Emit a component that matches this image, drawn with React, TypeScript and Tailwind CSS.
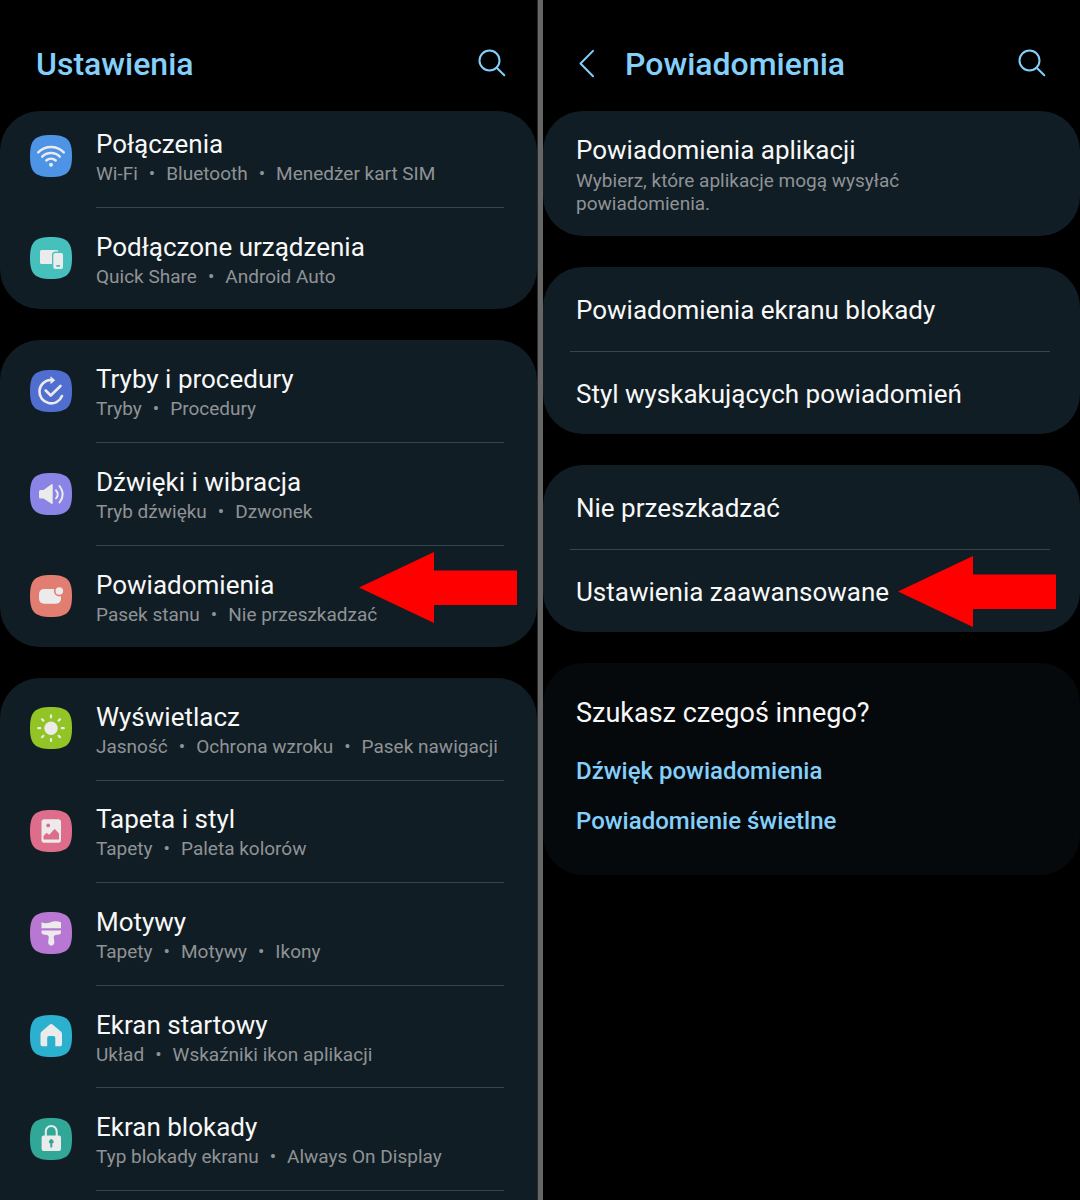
import type { ReactNode } from "react";

const glyphs: Record<string, ReactNode> = {
  wifi: (
    <>
      <g fill="none" stroke="#ebebeb" strokeWidth="2.5" strokeLinecap="round">
        <path d="M8.2 17.4C15.5 10.2 26.5 10.2 33.8 17.4" />
        <path d="M12.2 21.6C17 16.8 25 16.8 29.8 21.6" />
        <path d="M16.3 25.5C19 23 23 23 25.7 25.5" />
      </g>
      <circle cx="21" cy="29.7" r="2" />
    </>
  ),
  devices: (
    <>
      <path d="M11.5 13H27Q28.5 13 28.5 14.5H25.5Q22 14.5 22 18V27H11.5Q10 27 10 25.5V14.5Q10 13 11.5 13Z" />
      <path
        fillRule="evenodd"
        d="M25.3 16H31Q33 16 33 18V30Q33 32 31 32H25.3Q23.3 32 23.3 30V18Q23.3 16 25.3 16ZM26.3 28V29.7H30V28Z"
      />
    </>
  ),
  modes: (
    <>
      <g fill="none" stroke="#ebebeb" strokeWidth="2.6" strokeLinecap="round" strokeLinejoin="round">
        <path d="M20.5 10A11.7 11.7 0 1 0 32 26" />
        <path d="M15.7 20.5L20.7 25.5L30.5 16" />
      </g>
      <path d="M20.5 6.2L25.2 10.2L20.5 14.2Z" />
    </>
  ),
  sound: (
    <>
      <path d="M10.5 17H13.5L21.5 11.2Q22.7 10.5 22.7 12V30Q22.7 31.5 21.5 30.8L13.5 25.5H10.5Q9 25.5 9 24V18.5Q9 17 10.5 17Z" />
      <g fill="none" stroke="#ebebeb" strokeWidth="2" strokeLinecap="round">
        <path d="M26 17.3Q29.6 21.3 26 25.3" />
        <path d="M29.5 13Q36 21.3 29.5 29.5" />
      </g>
    </>
  ),
  notifications: (
    <>
      <rect x="9" y="14" width="22" height="14.7" rx="5" />
      <circle cx="29.3" cy="16" r="5.4" fill="#e27d72" />
      <circle cx="29.3" cy="16" r="3.8" />
    </>
  ),
  display: (
    <>
      <circle cx="21" cy="21.2" r="6.7" />
      <path
        fill="none"
        stroke="#ebebeb"
        strokeWidth="2.2"
        strokeLinecap="round"
        d="M21 8.4v2M21 32v2M8.2 21.2h2M31.8 21.2h2M12 12.2l1.4 1.4M28.6 28.8l1.4 1.4M12 30.2l1.4-1.4M28.6 13.6l1.4-1.4"
      />
    </>
  ),
  wallpaper: (
    <>
      <rect x="11.5" y="9.3" width="19.5" height="23.4" rx="2.8" />
      <g fill="#de6d8c">
        <circle cx="18.2" cy="15.4" r="1.9" />
        <path d="M13.5 26L16 23.2Q16.5 22.7 17.2 23.2L19.3 24.8L24 19.6Q24.7 19 25.4 19.6L29 23.5V29.5H13.5Z" />
      </g>
    </>
  ),
  themes: (
    <>
      <path d="M11.5 10.3C16 12.3 19.5 10.6 23 9.5C26 8.8 28.5 9.3 31 10.3V16.3H11.5Z" />
      <path d="M11.5 18.4H31V20.5Q31 22.4 29 22.6L25.5 23Q23.7 23.3 23.7 25L24.3 30A3.1 3.1 0 1 1 18.2 30L18.8 25Q18.8 23.3 17 23L13.5 22.6Q11.5 22.4 11.5 20.5Z" />
    </>
  ),
  home: (
    <path d="M19.8 9.6Q21.2 8.5 22.6 9.6L30.8 16.6Q32 17.6 32 19V29.5Q32 31.2 30.3 31.2H25.3V22.8Q25.3 21 23.5 21H19Q17.2 21 17.2 22.8V31.2H12.2Q10.5 31.2 10.5 29.5V19Q10.5 17.6 11.7 16.6Z" />
  ),
  lock: (
    <>
      <path fill="none" stroke="#ebebeb" strokeWidth="2" d="M15.8 18.5V13.4A5.4 5.4 0 0 1 26.7 13.4V18.5" />
      <path
        fillRule="evenodd"
        d="M13.6 17.4H29Q31 17.4 31 19.4V31Q31 33 29 33H13.6Q11.6 33 11.6 31V19.4Q11.6 17.4 13.6 17.4ZM20.3 25.5V29.5H22.3V25.5A2.2 2.2 0 1 0 20.3 25.5Z"
      />
    </>
  ),
};

type Item = { icon: string; color: string; title: string; details: string[]; marked?: boolean };

const connections: Item[] = [
  { icon: "wifi", color: "#4e94e6", title: "Połączenia", details: ["Wi-Fi", "Bluetooth", "Menedżer kart SIM"] },
  { icon: "devices", color: "#46c0bc", title: "Podłączone urządzenia", details: ["Quick Share", "Android Auto"] },
];

const alerts: Item[] = [
  { icon: "modes", color: "#506ed0", title: "Tryby i procedury", details: ["Tryby", "Procedury"] },
  { icon: "sound", color: "#8984e6", title: "Dźwięki i wibracja", details: ["Tryb dźwięku", "Dzwonek"] },
  {
    icon: "notifications",
    color: "#e27d72",
    title: "Powiadomienia",
    details: ["Pasek stanu", "Nie przeszkadzać"],
    marked: true,
  },
];

const appearance: Item[] = [
  { icon: "display", color: "#93c425", title: "Wyświetlacz", details: ["Jasność", "Ochrona wzroku", "Pasek nawigacji"] },
  { icon: "wallpaper", color: "#de6d8c", title: "Tapeta i styl", details: ["Tapety", "Paleta kolorów"] },
  { icon: "themes", color: "#b877d2", title: "Motywy", details: ["Tapety", "Motywy", "Ikony"] },
  { icon: "home", color: "#2bb0d0", title: "Ekran startowy", details: ["Układ", "Wskaźniki ikon aplikacji"] },
  { icon: "lock", color: "#31a797", title: "Ekran blokady", details: ["Typ blokady ekranu", "Always On Display"] },
];

function SearchButton() {
  return (
    <button type="button" aria-label="Szukaj" className="cursor-pointer">
      <svg
        className="block size-7 overflow-visible"
        viewBox="0 0 28 28"
        fill="none"
        stroke="#84d0fb"
        strokeWidth="2"
        strokeLinecap="round"
      >
        <circle cx="11.5" cy="10.5" r="10" />
        <path d="M18.7 17.7L26.3 25.3" />
      </svg>
    </button>
  );
}

function Arrow() {
  return (
    <svg className="pointer-events-none h-[71px] w-[158px]" viewBox="0 0 158 71" fill="#ff0000">
      <path d="M0 35.5L75 0V18.5H158V53H75V71Z" />
    </svg>
  );
}

function ItemRow({ item, className }: { item: Item; className: string }) {
  return (
    <li className={`group relative flex ${className}`}>
      <button type="button" className="flex w-full cursor-pointer items-stretch pr-[33px] pl-[30px] text-left">
        <svg className="mb-0.5 size-[42px] shrink-0 self-center" viewBox="0 0 42 42" fill="#ebebeb">
          <path fill={item.color} d="M21 0C37 0 42 5 42 21S37 42 21 42 0 37 0 21 5 0 21 0Z" />
          {glyphs[item.icon]}
        </svg>
        <span className="ml-6 flex min-w-0 flex-1 flex-col justify-center border-[#36444b] pt-0.5 group-[.divided]:border-b">
          <span className="text-[26px] leading-[34px] text-[#f8f8f8]">{item.title}</span>
          <span className="flex gap-[11px] text-[19px] leading-[26px] whitespace-nowrap text-[#8f9396]">
            {item.details.map((d, i) => (
              <span key={d} className="flex gap-[11px]">
                {i > 0 && <span>•</span>}
                {d}
              </span>
            ))}
          </span>
        </span>
      </button>
      {item.marked && (
        <div className="absolute top-1.5 right-5">
          <Arrow />
        </div>
      )}
    </li>
  );
}

function SimpleRow({ title, last, marked }: { title: string; last?: boolean; marked?: boolean }) {
  return (
    <li className="relative pr-[30px] pl-[27px]">
      <button
        type="button"
        className={`flex w-full cursor-pointer items-center pt-0.5 pl-[6px] text-left text-[26px] text-[#f8f8f8] ${
          last ? "h-[82px]" : "h-[85px] border-b border-[#36444b]"
        }`}
      >
        {title}
      </button>
      {marked && (
        <div className="absolute top-1.5 right-6">
          <Arrow />
        </div>
      )}
    </li>
  );
}

export default function App() {
  return (
    <main className="grid h-screen min-h-[1200px] grid-cols-[1fr_6px_1fr] overflow-hidden bg-black font-['Roboto',sans-serif]">
      <section className="flex min-w-0 flex-col">
        <header className="flex h-[111px] shrink-0 items-center pt-4 pr-[31px] pl-9">
          <h1 className="flex-1 text-[32px] font-medium text-[#84d0fb]">Ustawienia</h1>
          <SearchButton />
        </header>
        <div className="flex flex-1 flex-col gap-[31px]">
          {/* list is scrolled a little, the first row is cut at the top */}
          <ul className="overflow-hidden rounded-[40px] bg-[#111d24]">
            <ItemRow item={connections[0]} className="divided -mt-1.5 h-[103px]" />
            <ItemRow item={connections[1]} className="h-[101px]" />
          </ul>
          <ul className="rounded-[40px] bg-[#111d24]">
            {alerts.map((item, i) => (
              <ItemRow
                key={item.title}
                item={item}
                className={i === alerts.length - 1 ? "h-[101px]" : "divided h-[103px]"}
              />
            ))}
          </ul>
          <ul className="flex flex-1 flex-col rounded-t-[40px] bg-[#111d24] pb-[9px]">
            {appearance.map((item) => (
              <ItemRow key={item.title} item={item} className="divided min-h-[102px] flex-1" />
            ))}
          </ul>
        </div>
      </section>

      <div className="border-l border-[#2a2a2a] bg-[#666666]" />

      <section className="min-w-0">
        <header className="flex h-[111px] items-center pt-4 pr-[34px] pl-9">
          <button type="button" aria-label="Wstecz" className="mr-[30px] cursor-pointer">
            <svg
              className="block h-7 w-4 overflow-visible"
              viewBox="0 0 16 28"
              fill="none"
              stroke="#84d0fb"
              strokeWidth="2"
              strokeLinecap="round"
              strokeLinejoin="round"
            >
              <path d="M14 0.9L1.5 13.5L14 26.2" />
            </svg>
          </button>
          <h1 className="flex-1 text-[32px] font-medium text-[#84d0fb]">Powiadomienia</h1>
          <SearchButton />
        </header>
        <div className="flex flex-col gap-[31px]">
          <button
            type="button"
            className="cursor-pointer rounded-[40px] bg-[#111d24] pt-[22px] pr-[60px] pb-[21px] pl-[33px] text-left"
          >
            <span className="block text-[26px] leading-[34px] text-[#f8f8f8]">Powiadomienia aplikacji</span>
            <span className="mt-0.5 block text-[19px] leading-[23px] text-[#8f9396]">
              Wybierz, które aplikacje mogą wysyłać powiadomienia.
            </span>
          </button>
          <ul className="rounded-[40px] bg-[#111d24]">
            <SimpleRow title="Powiadomienia ekranu blokady" />
            <SimpleRow title="Styl wyskakujących powiadomień" last />
          </ul>
          <ul className="rounded-[40px] bg-[#111d24]">
            <SimpleRow title="Nie przeszkadzać" />
            <SimpleRow title="Ustawienia zaawansowane" last marked />
          </ul>
          <div className="flex flex-col items-start rounded-[40px] bg-[#05090c] pt-[33px] pb-[29px] pl-[33px]">
            <h2 className="text-[27px] leading-[34px] text-[#f8f8f8]">Szukasz czegoś innego?</h2>
            <a href="#dzwiek" className="mt-4 text-[24px] leading-[50px] font-medium text-[#84d0fb]">
              Dźwięk powiadomienia
            </a>
            <a href="#swietlne" className="text-[24px] leading-[50px] font-medium text-[#84d0fb]">
              Powiadomienie świetlne
            </a>
          </div>
        </div>
      </section>
    </main>
  );
}
